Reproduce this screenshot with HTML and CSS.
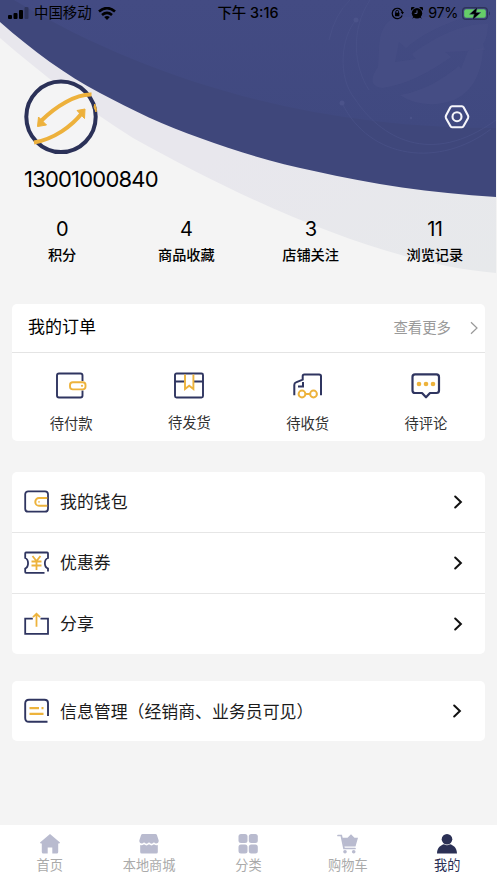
FILE: index.html
```html
<!DOCTYPE html>
<html lang="zh-CN">
<head>
<meta charset="utf-8">
<title>我的</title>
<link rel="stylesheet" href="styles.css">
</head>
<body>
<div class="page">
  <svg class="hero-art" viewBox="0 0 496 290" width="496" height="290" fill="none">
    <defs>
      <linearGradient id="pale" x1="0" y1="0" x2="1" y2="1"><stop offset=".5" stop-color="#e8e7ed"/><stop offset="1" stop-color="#e7e9eb"/></linearGradient>
      <linearGradient id="sheen" x1="0" y1="0" x2="0" y2="1"><stop offset="0" stop-color="#434b83"/><stop offset="1" stop-color="#404980"/></linearGradient>
    </defs>
    <path fill="url(#pale)" d="M0 0H496V273C390 264 260 209 133 138C85 108 42 74 0 38Z"/>
    <path fill="#3f477b" d="M0 0H496V197C430 193 372 184 314 171C276 163 238 152 200 138C165 126 132 110 100 93C66 75 33 51 0 22Z"/>
    <path fill="url(#sheen)" d="M14 0H496V128C330 128 165 90 14 0Z"/>
    <g stroke="#4b538a" opacity=".6">
      <path d="M329 40Q335 14 350 0M356 20C341 37 337 77 355 99C380 137 430 168 496 120M370 0C350 30 354 67 369 90M342 103C370 160 440 168 491 129"/>
    </g>
    <g fill="#4b538a"><circle cx="356" cy="20" r="2.5"/><circle cx="342" cy="103" r="2.5"/><circle cx="411" cy="118" r="1.2"/></g>
    <path fill="#495187" opacity=".55" d="M397 17H466C440 25 421 35 406 48L399 42L395 62L416 59L412 54C435 37 463 23 488 24C488 32 486 40 483 44L485 50L445 52L451 57C428 73 408 84 382 88C369 86 371 77 378 67C380 48 376 24 397 17Z"/>
    <path fill="#495187" opacity=".55" d="M400 95C424 91 443 79 459 66L461 69L468 51L483 48C482 76 470 93 454 100C436 107 414 105 400 95Z"/>
  </svg>

  <header class="status">
    <div class="status-left">
      <svg width="21" height="12" viewBox="0 0 21 12"><rect y="8" width="4" height="4" rx="1"/><rect x="5.5" y="6" width="4" height="6" rx="1"/><rect x="11" y="3" width="4" height="9" rx="1"/><rect x="16.5" width="4" height="12" rx="1" opacity=".25"/></svg>
      <span>中国移动</span>
      <svg width="18" height="13" viewBox="0 0 18 13" fill="none" stroke="#000" stroke-width="2.6"><path d="M1 4.6Q9-2.4 17 4.6M4 7.9Q9 3.7 14 7.9"/><path d="M6.2 10Q9 7.8 11.8 10L9 13Z" fill="#000" stroke="none"/></svg>
    </div>
    <div class="status-time">下午 3:16</div>
    <div class="status-right">
      <svg class="lock" width="13" height="13" viewBox="0 0 13 13" fill="none" stroke="#000"><path d="M11.2 8.5A5.2 5.2 0 1 1 11.4 5" stroke-width="1.2"/><path d="M9.8 5H13L11.5 7.5Z" fill="#000" stroke="none"/><rect x="4" y="5.8" width="4.4" height="3.4" rx=".5" fill="#000" stroke="none"/><path d="M4.8 6V4.7a1.4 1.4 0 0 1 2.8 0V6"/></svg>
      <svg class="alarm" width="12" height="12" viewBox="0 0 12 12"><circle cx="6" cy="6.3" r="5.2"/><path d="M.3 3.6A2 2 0 0 1 3.7.5ZM11.7 3.6A2 2 0 0 0 8.3.5ZM1 11.7L3 9L4 10ZM11 11.7L9 9L8 10Z"/><path d="M6 3.4V6.4H3.6" fill="none" stroke="#596092"/></svg>
      <span class="percent">97%</span>
      <svg class="battery" width="29" height="13" viewBox="0 0 29 13"><rect x=".6" y=".6" width="24.8" height="11.8" rx="3.5" fill="none" stroke="#2d3359" stroke-width="1.2"/><rect x="2.2" y="2.2" width="21.6" height="8.6" rx="2" fill="#65cd68"/><path d="M27 4.3Q29 6.5 27 8.7Z" fill="#2d3359"/><path d="M15.5 0L7.5 7.2H12.2L10.4 13L18.8 5.5H14Z" stroke="#414a80" stroke-width=".5"/></svg>
    </div>
  </header>

  <section class="profile">
    <div class="profile-top">
      <svg width="74" height="76" viewBox="0 0 74 76" fill="none">
        <ellipse cx="37" cy="37.8" rx="34.7" ry="35.3" fill="#f4f4f5" stroke="#2b3158" stroke-width="4"/>
        <path d="M67.5 15.5C52 15 32 27 17 42M10 63.5C30 60 48 47 58 34" stroke="#edb13c" stroke-width="4"/>
        <path d="M13.5 47.5L14.5 38L22.5 46ZM61 30L53 31.5L60.5 39.5ZM70.8 25L72.3 30L72 33L70 28Z" fill="#edb13c" stroke="#edb13c" stroke-linejoin="round"/>
      </svg>
      <svg class="settings" width="26" height="24" viewBox="0 0 26 24" fill="none" stroke="#f5f5fa" stroke-width="2.1" stroke-linejoin="round"><path d="M8 1.3H18Q19 1.3 19.6 2.3L24 10.5Q24.6 11.8 24 13.2L19.6 21Q19 22.2 18 22.2H8Q7 22.2 6.4 21L2 13.2Q1.4 11.8 2 10.5L6.4 2.3Q7 1.3 8 1.3Z"/><circle cx="13" cy="11.7" r="4.5"/></svg>
    </div>
    <div class="phone">13001000840</div>
  </section>

  <section class="stats">
    <div class="stat"><b>0</b><span>积分</span></div>
    <div class="stat"><b>4</b><span>商品收藏</span></div>
    <div class="stat"><b>3</b><span>店铺关注</span></div>
    <div class="stat"><b>11</b><span>浏览记录</span></div>
  </section>

  <section class="card orders">
    <div class="orders-head">
      <h2>我的订单</h2>
      <span class="more">查看更多</span>
      <svg width="8" height="14" viewBox="0 0 8 14" fill="none" stroke="#999" stroke-width="1.2"><path d="M1 1.2L7 7L1 12.8"/></svg>
    </div>
    <div class="orders-grid">
      <div class="order">
        <svg width="32" height="28" viewBox="0 0 32 28" fill="none" stroke="#2f3560" stroke-width="1.9"><path d="M27.5 9V3.5Q27.5 1.5 25.5 1.5H4Q2 1.5 2 3.5V23.5Q2 25.5 4 25.5H25.5Q27.5 25.5 27.5 23.5V18.5"/><rect x="15" y="10.2" width="15.5" height="7.2" rx="2.8" stroke="#edb33c"/><circle cx="27" cy="13.8" r="1.1" fill="#edb33c" stroke="none"/></svg>
        <span>待付款</span>
      </div>
      <div class="order second">
        <svg width="32" height="28" viewBox="0 0 32 28" fill="none" stroke="#2f3560" stroke-width="1.9"><rect x="2" y="1.5" width="28" height="24" rx="1.5"/><path d="M2 9.5H11.5M21 9.5H30"/><path d="M12 2.5V17L16.2 13.8L20.4 17V2.5" stroke="#edb33c"/></svg>
        <span>待发货</span>
      </div>
      <div class="order">
        <svg width="32" height="28" viewBox="0 0 32 28" fill="none" stroke="#2f3560" stroke-width="2"><path d="M2.3 23.3V13Q2.3 11 4 10.4L10.7 7.6V4Q10.7 2.4 12.3 2.4H27.2Q29 2.4 29 4.2V23.3M11 10V14.5H6"/><g stroke="#edb33c"><circle cx="10" cy="22" r="3.4"/><circle cx="21.5" cy="22" r="3.4"/><path d="M13.5 22H18"/></g></svg>
        <span>待收货</span>
      </div>
      <div class="order">
        <svg width="32" height="28" viewBox="0 0 32 28" fill="none" stroke="#2f3560" stroke-width="2.2" stroke-linejoin="round"><path d="M5 2.4H26.5Q29 2.4 29 5V18.5Q29 21 26.5 21H20L16 25.3L12 21H5Q2.5 21 2.5 18.5V5Q2.5 2.4 5 2.4Z"/><g fill="#edb33c" stroke="none"><circle cx="9" cy="12" r="2.3"/><circle cx="16" cy="12" r="2.3"/><circle cx="23" cy="12" r="2.3"/></g></svg>
        <span>待评论</span>
      </div>
    </div>
  </section>

  <section class="card menu">
    <div class="row">
      <svg width="26" height="26" viewBox="0 0 26 26" fill="none" stroke="#2f3560" stroke-width="1.8"><rect x="1.2" y="2.3" width="22.8" height="20.4" rx="3"/><path d="M23.3 9H15A3.7 3.9 0 0 0 15 16.8H23.3" stroke="#edb33c" stroke-width="2"/><circle cx="15" cy="12.9" r=".8" fill="#edb33c" stroke="none"/></svg>
      <span>我的钱包</span>
      <svg class="chev" width="9" height="14" viewBox="0 0 9 14"><path d="M1.2 1.5L6.9 7L1.2 12.5"/></svg>
    </div>
    <div class="row">
      <svg width="26" height="26" viewBox="0 0 26 26" fill="none" stroke="#2f3560" stroke-width="1.8"><path d="M20.5 22.8H2Q1.2 22.8 1.2 22V18.5C5 17 5 9.5 1.2 8V3.5Q1.2 2.5 2 2.5H23.2Q24 2.5 24 3.5V8C19.8 9.5 19.8 17 24 18.5V21.5"/><path d="M8.5 6L12.5 11L16.5 6M12.5 11V20M7.5 11.5H17.5M7.5 15.5H17.5" stroke="#edb33c"/></svg>
      <span>优惠券</span>
      <svg class="chev" width="9" height="14" viewBox="0 0 9 14"><path d="M1.2 1.5L6.9 7L1.2 12.5"/></svg>
    </div>
    <div class="row">
      <svg width="26" height="26" viewBox="0 0 26 26" fill="none" stroke="#2f3560" stroke-width="1.8"><path d="M8.8 7.7H1.2V22.8H24V7.7H16.5"/><path d="M12.5 15.8V3.2M9 6.2L12.5 2.8L16 6.2" stroke="#edb33c"/></svg>
      <span>分享</span>
      <svg class="chev" width="9" height="14" viewBox="0 0 9 14"><path d="M1.2 1.5L6.9 7L1.2 12.5"/></svg>
    </div>
  </section>

  <section class="card manage">
    <div class="row">
      <svg width="26" height="26" viewBox="0 0 26 26" fill="none" stroke="#2f3560" stroke-width="1.9"><path d="M24 18V5Q24 1.7 20.5 1.7H5Q1.2 1.7 1.2 5.5V20Q1.2 23.8 5 23.8H23.5"/><path d="M5.5 10.2H15M17.5 10.2H19.5M5.5 15.8H19.5" stroke="#edb33c" stroke-width="2.3"/></svg>
      <span>信息管理（经销商、业务员可见）</span>
      <svg class="chev" width="9" height="14" viewBox="0 0 9 14"><path d="M1.2 1.5L6.9 7L1.2 12.5"/></svg>
    </div>
  </section>

  <nav class="tabs">
    <div class="tab"><svg width="20" height="20" viewBox="0 0 20 20"><path d="M10 0L20 8.6Q20 9.7 18.2 9.5V18Q18.2 19.5 16.7 19.5H12.3V13.5H7.7V19.5H3.3Q1.8 19.5 1.8 18V9.5Q0 9.7 0 8.6Z"/></svg><span>首页</span></div>
    <div class="tab"><svg width="20" height="20" viewBox="0 0 20 20"><path d="M3.5 0H16.5Q17.5 0 17.9 1L19.7 6.5C20 9.5 16.5 10.5 15 8.3Q12.5 11 10 8.3Q7.5 11 5 8.3C3.5 10.5 0 9.5.3 6.5L2.1 1Q2.5 0 3.5 0ZM1.2 11Q3.5 11.7 5 10.3Q7.5 12.5 10 10.3Q12.5 12.5 15 10.3Q16.5 11.7 18.8 11V18Q18.8 19.5 17.3 19.5H2.7Q1.2 19.5 1.2 18Z"/></svg><span>本地商城</span></div>
    <div class="tab"><svg width="20" height="20" viewBox="0 0 20 20"><rect x=".5" width="9" height="9" rx="2.5"/><rect x="10.8" width="9" height="9" rx="2.5"/><rect x=".5" y="10.5" width="9" height="9" rx="2.5"/><rect x="10.8" y="10.5" width="9" height="9" rx="2.5"/></svg><span>分类</span></div>
    <div class="tab"><svg width="22" height="20" viewBox="0 0 22 20"><path d="M1 1.5H4.3L7 14.5H18" fill="none" stroke="#b9bbcf" stroke-width="1.7" stroke-linecap="round"/><path d="M5 3.7H10.5L14 .2L17.5 3.7H21L18.5 12.4H7Z"/><circle cx="8" cy="17.7" r="1.8"/><circle cx="16.7" cy="17.7" r="1.8"/></svg><span>购物车</span></div>
    <div class="tab active"><svg width="20" height="20" viewBox="0 0 20 20"><circle cx="10" cy="5.3" r="5.3"/><path d="M0 19.5C.2 13.5 4 11 7 10.3Q10 12.3 13 10.3C16 11 19.8 13.5 20 19.5Z"/></svg><span>我的</span></div>
  </nav>
</div>
</body>
</html>
```
FILE: styles.css
```css
* { box-sizing: border-box; }
body {
  margin: 0;
  background: #f4f4f4;
  color: #000;
  font-family: Inter, "Noto Sans CJK SC", sans-serif;
}
svg { display: block; flex: none; }
.page {
  position: relative;
  display: flex;
  flex-direction: column;
  height: 883px;
  overflow: hidden;
}
.hero-art { position: absolute; top: 0; left: 0; }
.status, .profile, .stats { position: relative; }

.status {
  display: grid;
  grid-template-columns: 1fr auto 1fr;
  height: 26px;
  padding: 0 6px 0 8px;
  align-items: center;
  font-size: 14.4px;
  line-height: 26px;
}
.status-left, .status-right { display: flex; align-items: center; }
.status-left { gap: 6px; }
.status-left span { margin-left: -1px; }
.status-time { margin-left: -3px; font-weight: 500; }
.status-right { justify-content: flex-end; }
.lock { margin-right: 7px; }
.alarm { margin-right: 5px; }
.percent { letter-spacing: -.4px; }
.battery { margin-left: 4px; }

.profile { padding: 53px 27px 0 24px; height: 190px; }
.profile-top { display: flex; justify-content: space-between; }
.settings { margin-top: 26px; }
.phone { margin-top: 8px; font-size: 22px; line-height: 32px; letter-spacing: -.8px; }

.stats { display: grid; grid-template-columns: repeat(4, 1fr); height: 88px; }
.stat {
  display: flex;
  flex-direction: column;
  align-items: center;
  font-size: 14.2px;
  font-weight: 500;
  line-height: 25px;
}
.stat b { font-size: 20px; font-weight: 400; line-height: 26px; letter-spacing: -.4px; }

.card { margin: 0 12px; background: #fff; border-radius: 5px; flex: none; }
.orders { height: 137px; }
.orders-head {
  display: flex;
  align-items: center;
  height: 49px;
  padding: 0 7px 0 16px;
  border-bottom: 1px solid #e4e4e4;
}
.orders-head h2 { flex: 1; margin: -2px 0 0; font-size: 17px; font-weight: 400; line-height: 24px; }
.more { margin: -3px 19px 0 0; color: #999; font-size: 14.4px; }
.orders-grid { display: grid; grid-template-columns: repeat(4, 1fr); padding-top: 19px; }
.order {
  display: flex;
  flex-direction: column;
  align-items: center;
  gap: 13px;
  color: #333;
  font-size: 14.3px;
  line-height: 22px;
}
.order.second { gap: 12px; }

.menu { margin-top: 31px; }
.row {
  display: flex;
  align-items: center;
  height: 60px;
  padding: 0 22px 0 12px;
  color: #1b1b1b;
  font-size: 16.9px;
}
.menu .row + .row { border-top: 1px solid #e6e6e6; height: 61px; }
.row span { flex: 1; margin: -3px 0 0 10px; white-space: nowrap; }
.chev { fill: none; stroke: #111; stroke-width: 2; stroke-linecap: round; }
.manage { margin-top: 27px; }
.manage .row { padding-right: 23px; }
.manage .row span { margin-top: -1px; font-size: 16.9px; }

.tabs {
  display: grid;
  grid-template-columns: repeat(5, 1fr);
  height: 58px;
  margin-top: auto;
  padding-top: 9px;
  background: #fff;
}
.tab {
  display: flex;
  flex-direction: column;
  align-items: center;
  color: #aaa;
  font-size: 13.2px;
  line-height: 22px;
}
.tab svg { fill: #b9bbcf; }
.tab.active { color: #2b3055; }
.tab.active svg { fill: #2b3055; }
```
